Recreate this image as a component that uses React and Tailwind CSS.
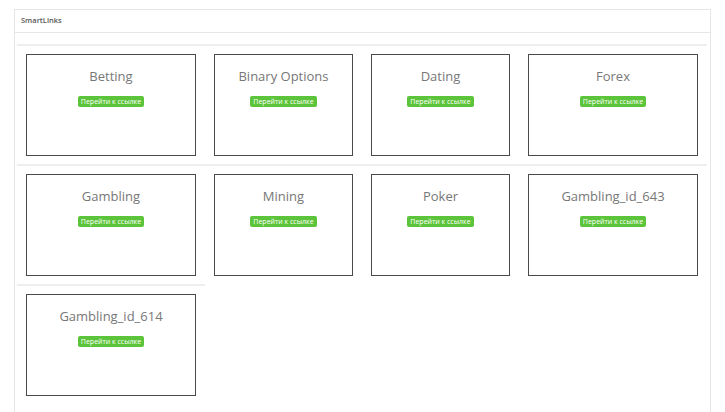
const links = [
  "Betting",
  "Binary Options",
  "Dating",
  "Forex",
  "Gambling",
  "Mining",
  "Poker",
  "Gambling_id_643",
  "Gambling_id_614",
];

const colWidths = ["w-[188px]", "w-[157px]", "w-[157px]", "w-[188px]"];

const LinkCard = ({ title, col }) => (
  <div className={`${colWidths[col]} border-t-2 border-[#eeeeee] px-[9px] pt-[8px] pb-[8px]`}>
    <div className="h-[102px] border border-[#4a4a4a] bg-white flex flex-col items-center pt-[11px]">
      <div className="text-[13px] leading-[20px] text-[#777777]">{title}</div>
      <button className="mt-[10px] h-[11px] px-[3px] rounded-[2px] bg-[#5cc43a] text-white text-[7px] leading-[11px]">
        Перейти к ссылке
      </button>
    </div>
  </div>
);

export default function App() {
  return (
    <div
      className="min-h-[412px] bg-white pt-[9px] pl-[14px] pr-[14px]"
      style={{ fontFamily: '"Open Sans", "Noto Sans", sans-serif' }}
    >
      <div className="border border-b-0 border-[#e6e6e6] min-h-[403px]">
        {/* Header */}
        <div className="h-[23px] border-b border-[#e6e6e6] flex items-center px-[6px]">
          <span className="text-[7.5px] font-semibold text-[#555555]">SmartLinks</span>
        </div>

        {/* Body */}
        <div className="pt-[11px] pl-[2px] pr-[3px]">
          <div className="flex flex-wrap w-[690px]">
            {links.map((title, i) => (
              <LinkCard key={title} title={title} col={i % 4} />
            ))}
          </div>
        </div>
      </div>
    </div>
  );
}
